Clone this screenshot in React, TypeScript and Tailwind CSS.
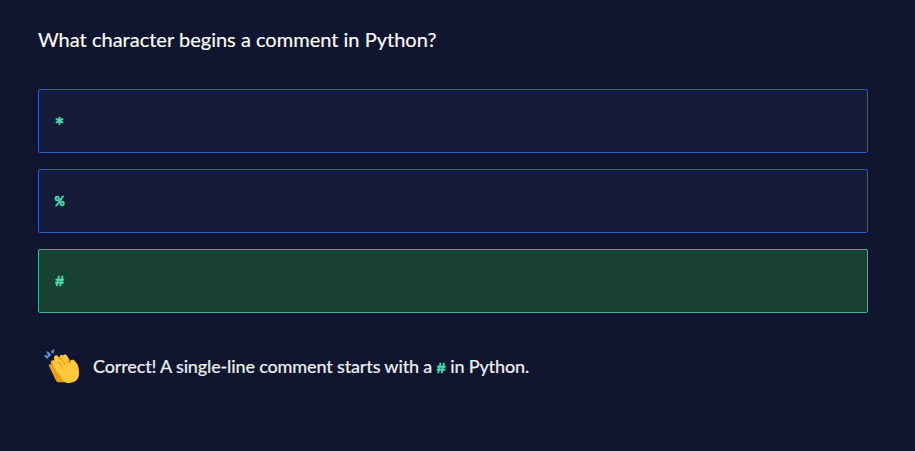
import React from "react";

function ClappingHands() {
  return (
    <svg width="36" height="36" viewBox="42 24 108 108" className="shrink-0" aria-hidden="true">
      <path d="M57 78 C55 73 61 71 64 74 L62 66 C63 59 70 60 73 63 C70 51 78 50 83 57 L105 86 L111 127 L88 127 C83 127 79 124 77 120 Z" fill="#f19a16" />
      <path d="M68 68 C66 61 72 58 77 63 L72 54 C72 46 80 43 85 50 L89 54 C88 45 96 42 101 47 L123 73 C120 62 128 58 136 65 C145 74 147 84 147 100 C147 119 135 129 116 129 C105 129 99 122 94 113 L75 87 C68 79 69 74 68 68 Z" fill="#ffc83d" />
      <path d="M82 67 Q92 68 97 82 M86 53 Q98 57 105 75 M99 48 Q110 52 112 67" fill="none" stroke="#f19a16" strokeWidth="3.5" strokeLinecap="round" />
      <path d="M100 48 C101 42 109 43 111 47 L119 61 L117 70 Z M120 72 C117 57 130 56 136 65 L138 80 Z" fill="#ffc83d" />
      <path d="M45 47 L54 50 L52 54 Z M52 36 L61 44 L57 48 Z M71 30 L69 38 L65 36 Z" fill="#4c9eed" stroke="#4c9eed" strokeWidth="4" strokeLinejoin="round" />
    </svg>
  );
}

function Code({ children }: { children: React.ReactNode }) {
  return (
    <code className="font-['Liberation_Mono',monospace] text-[15.5px] leading-5 font-bold text-[#4bdfb0] [-webkit-text-stroke:0.5px_#4bdfb0]">
      {children}
    </code>
  );
}

function Answer({ children, correct = false }: { children: React.ReactNode; correct?: boolean }) {
  return (
    <button
      className={`flex h-16 w-full items-center rounded-xs border pt-px pl-4 text-left ${
        correct ? "border-[#3eb489] bg-[#184033]" : "border-[#2a5bc8] bg-[#151c37]"
      }`}
    >
      {children}
    </button>
  );
}

export default function App() {
  return (
    <main className="h-[451px] w-full bg-[#10162f] pt-[23px] pr-[47px] pl-[38px] font-['Lato',sans-serif] text-white">
      <h1 className="h-8 text-[20px] leading-8 font-normal tracking-[0.01px] whitespace-nowrap [-webkit-text-stroke:0.15px_white]">What character begins a comment in Python?</h1>
      <div className="mt-[34px] flex flex-col gap-4">
        <Answer>
          <code className="pt-[5px] font-['DejaVu_Sans_Mono',monospace] text-[15px] leading-5 font-bold text-[#4bdfb0] [-webkit-text-stroke:0.5px_#4bdfb0]">*</code>
        </Answer>
        <Answer><Code>%</Code></Answer>
        <Answer correct><Code>#</Code></Answer>
      </div>
      <div className="mt-[35px] flex items-center gap-[13px] pl-1.5">
        <ClappingHands />
        <p className="text-[18px] leading-6 font-medium tracking-[-0.15px] whitespace-nowrap text-[#e9eaed] [-webkit-text-stroke:0.15px_#e9eaed]">
          Correct! A single-line comment starts with a <Code>#</Code> in Python.
        </p>
      </div>
    </main>
  );
}
